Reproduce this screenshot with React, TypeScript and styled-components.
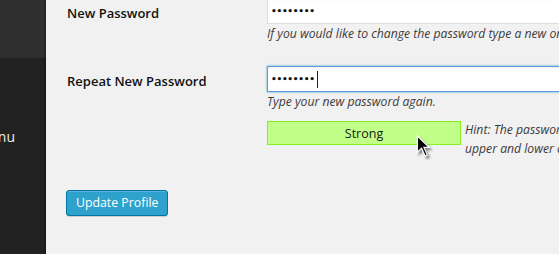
import React from "react";
import styled, { createGlobalStyle } from "styled-components";

const GlobalStyle = createGlobalStyle`
  html, body {
    margin: 0;
    padding: 0;
    background: #f1f1f1;
    overflow: hidden;
  }
  body {
    font-family: "Open Sans", "Liberation Sans", sans-serif;
    color: #444;
  }
`;

const Page = styled.div`
  display: flex;
  width: 559px;
  height: 254px;
  overflow: hidden;
  background: #f1f1f1;
`;

const Sidebar = styled.nav`
  flex: 0 0 46px;
  display: flex;
  flex-direction: column;
  background: #222;
  box-shadow: inset -2px 0 0 #1b1b1b;
  overflow: hidden;
`;

const SubmenuBlock = styled.div`
  height: 58px;
  background: #2f2f2f;
  box-shadow: inset -2px 0 0 #272727;
`;

const MenuItem = styled.div`
  display: flex;
  justify-content: flex-end;
  padding: 70px 31px 0 0;
  font-size: 14px;
  line-height: 18px;
  color: #eee;
  white-space: nowrap;
`;

const Content = styled.main`
  flex: 1;
  display: flex;
  flex-direction: column;
  padding-left: 20px;
  margin-top: -2px;
  min-width: 0;
`;

const Row = styled.div<{ $gap?: number }>`
  display: grid;
  grid-template-columns: 201px 1fr;
  margin-top: ${(p) => p.$gap ?? 0}px;
`;

const Label = styled.label`
  box-sizing: border-box;
  height: 26px;
  display: flex;
  align-items: center;
  padding: 3px 0 0 1px;
  font-size: 13px;
  font-weight: 600;
  color: #111;
  white-space: nowrap;
`;

const FieldColumn = styled.div`
  display: flex;
  flex-direction: column;
  min-width: 0;
`;

const Field = styled.div<{ $focused?: boolean }>`
  box-sizing: border-box;
  width: 340px;
  height: 26px;
  display: flex;
  align-items: center;
  padding-left: 3px;
  background: #fff;
  border: 1px solid ${(p) => (p.$focused ? "#5b9dd9" : "#ddd")};
  box-shadow: ${(p) =>
    p.$focused
      ? "0 0 2px rgba(30,140,190,0.8), inset 0 1px 2px rgba(0,0,0,0.07)"
      : "inset 0 1px 2px rgba(0,0,0,0.07)"};
`;

const Dots = styled.span`
  font-family: "DejaVu Sans", sans-serif;
  font-size: 9px;
  font-weight: bold;
  letter-spacing: -0.3px;
  color: #111;
  line-height: 1;
`;

const Caret = styled.span`
  display: inline-block;
  width: 1px;
  height: 17px;
  margin-left: 2px;
  background: #222;
`;

const Description = styled.p`
  margin: 1px 0 0;
  font-size: 12.2px;
  font-style: italic;
  line-height: 18px;
  color: #3c3c3c;
  white-space: nowrap;
`;

const MeterRow = styled.div`
  display: flex;
  align-items: flex-start;
  margin-top: 10px;
`;

const Meter = styled.div`
  box-sizing: border-box;
  flex: 0 0 194px;
  height: 24px;
  display: flex;
  align-items: center;
  justify-content: center;
  background: #c1ff88;
  border: 1px solid #86f020;
  font-size: 12.5px;
  color: #1a1a1a;
`;

const Hint = styled.p`
  margin: -1px 0 0 4px;
  font-size: 12.2px;
  font-style: italic;
  line-height: 19px;
  color: #3c3c3c;
  white-space: nowrap;
`;

const HintLine = styled.span`
  display: block;
`;

const Actions = styled.div`
  margin-top: 32px;
  display: flex;
`;

const Button = styled.button`
  box-sizing: border-box;
  height: 26px;
  padding: 0 9px;
  background: #2ea2cc;
  border: 1px solid #0074a2;
  border-radius: 3px;
  box-shadow: inset 0 1px 0 rgba(120, 200, 230, 0.5),
    0 1px 0 rgba(0, 0, 0, 0.15);
  color: #fff;
  font-family: "Open Sans", "Liberation Sans", sans-serif;
  font-size: 12.3px;
  line-height: 24px;
`;

const CursorWrap = styled.div`
  position: absolute;
  left: 415px;
  top: 133px;
  width: 19px;
  height: 27px;
  pointer-events: none;
`;

const Cursor = () => (
  <CursorWrap>
    <svg width="19" height="27" viewBox="0 0 18 26">
      <defs>
        <filter id="sh" x="-50%" y="-50%" width="200%" height="200%">
          <feGaussianBlur stdDeviation="0.8" />
        </filter>
      </defs>
      <path
        d="M2.5 2.5 L2.5 21 L7 16.6 L10.3 24 L13.4 22.6 L10.2 15.4 L16 15.4 Z"
        fill="rgba(0,0,0,0.45)"
        filter="url(#sh)"
        transform="translate(0.8,1.2)"
      />
      <path
        d="M1.5 1.5 L1.5 20 L6 15.6 L9.3 23 L12.4 21.6 L9.2 14.4 L15 14.4 Z"
        fill="#fff"
      />
      <path
        d="M2.7 4.3 L2.7 17.2 L6.4 13.7 L9.9 21.4 L11 20.9 L7.6 13.3 L12.1 13.3 Z"
        fill="#000"
      />
    </svg>
  </CursorWrap>
);

export default function App() {
  return (
    <>
      <GlobalStyle />
      <Page>
        <Sidebar>
          <SubmenuBlock />
          <MenuItem>Collapse menu</MenuItem>
        </Sidebar>
        <Content>
          <Row>
            <Label htmlFor="pass1">New Password</Label>
            <FieldColumn>
              <Field id="pass1">
                <Dots>••••••••</Dots>
              </Field>
              <Description>
                If you would like to change the password type a new one. Otherwise leave this blank.
              </Description>
            </FieldColumn>
          </Row>
          <Row $gap={23}>
            <Label htmlFor="pass2">Repeat New Password</Label>
            <FieldColumn>
              <Field id="pass2" $focused>
                <Dots>••••••••</Dots>
                <Caret />
              </Field>
              <Description>Type your new password again.</Description>
              <MeterRow>
                <Meter>Strong</Meter>
                <Hint>
                  <HintLine>
                    Hint: The password should be at least seven characters long. To make it stronger, use
                  </HintLine>
                  <HintLine>
                    upper and lower case letters, numbers and symbols like ! " ? $ % ^ &amp; ).
                  </HintLine>
                </Hint>
              </MeterRow>
            </FieldColumn>
          </Row>
          <Actions>
            <Button type="button">Update Profile</Button>
          </Actions>
        </Content>
      </Page>
      <Cursor />
    </>
  );
}
